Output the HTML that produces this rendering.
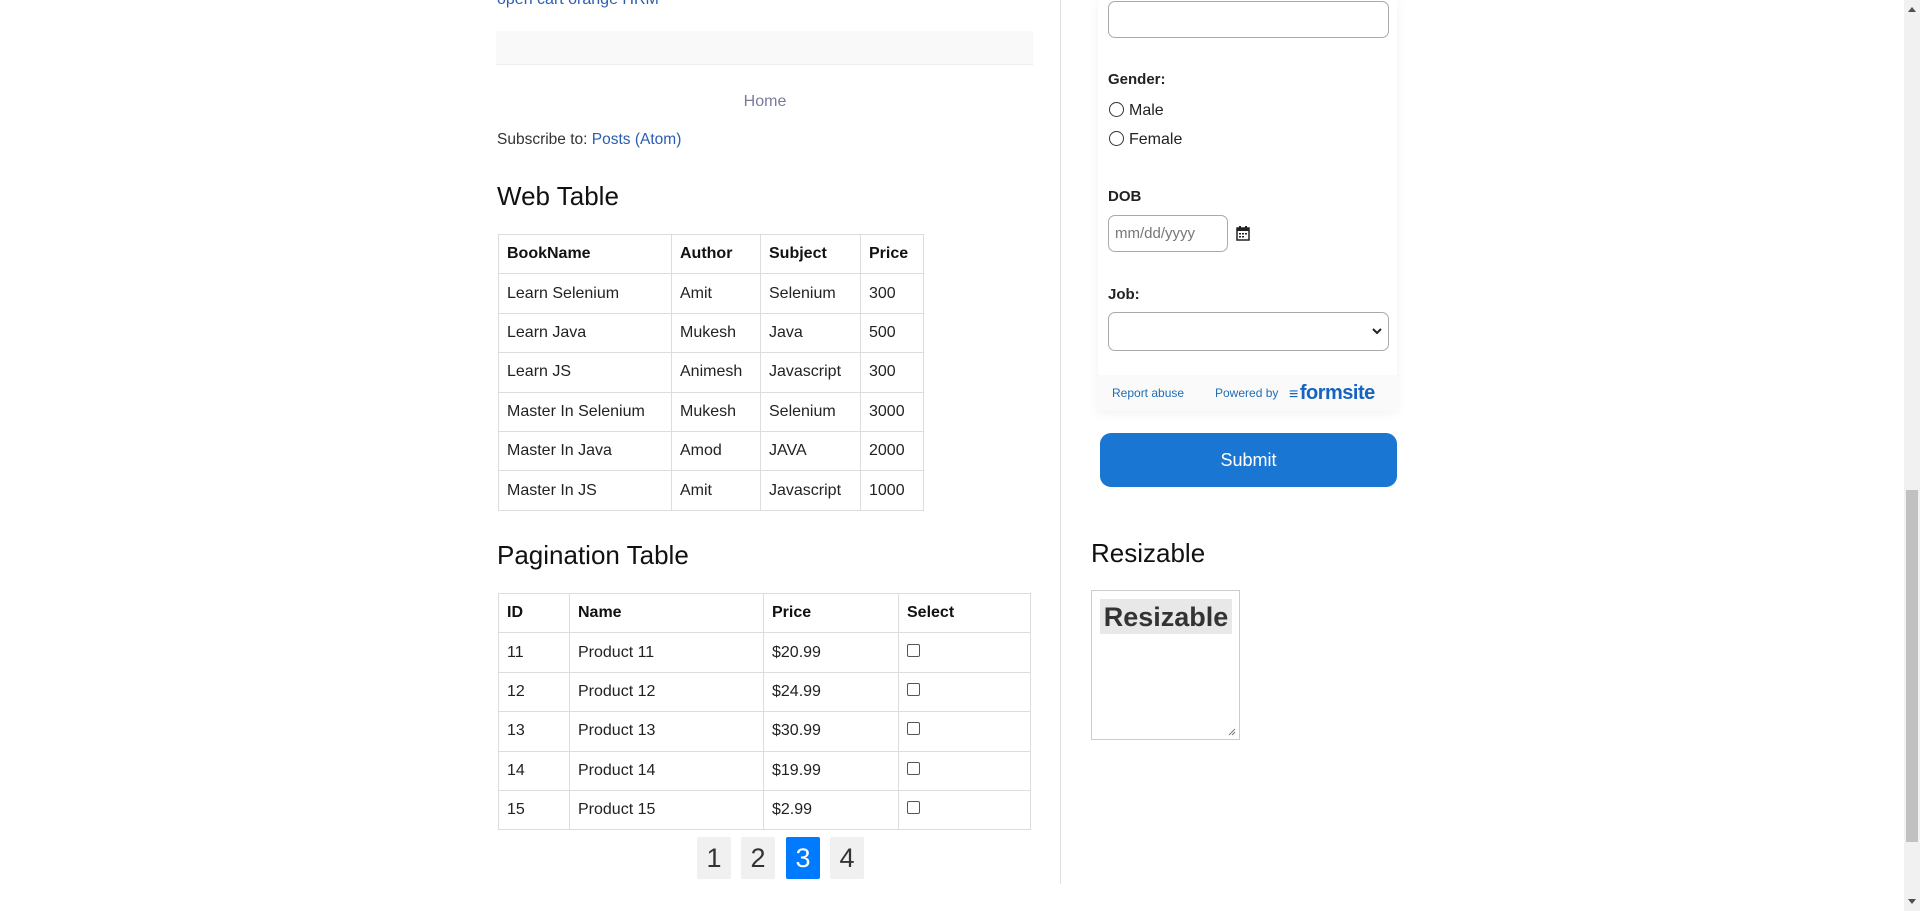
<!DOCTYPE html>
<html><head><meta charset="utf-8"><style>
*{box-sizing:border-box;margin:0;padding:0}
body{width:1920px;height:911px;overflow:hidden;background:#fff;font-family:"Liberation Sans",Arial,sans-serif;position:relative;color:#222}
.a{position:absolute}
a{color:#2a5db0;text-decoration:none}
table{border-collapse:collapse;position:absolute;font-size:16px}
td,th{border:1px solid #ddd;padding:0 8px;text-align:left;height:39.4px}
th{font-weight:bold;color:#111}
.lbl{font-weight:bold;font-size:15px;color:#222}
.pg{position:absolute;top:837px;width:34px;height:42px;background:#f0f0f0;font-size:27px;text-align:center;line-height:42px;color:#333;border-radius:2px}
.radio{display:inline-block;width:15px;height:15px;border:1.5px solid #333;border-radius:50%;vertical-align:-2px;margin-right:5px}
.cb{display:inline-block;width:13px;height:13px;border:1px solid #555;border-radius:2px}
</style></head><body>
<div class="a" style="left:497px;top:-9px;font-size:16px"><a>open cart orange HRM</a></div>
<div class="a" style="left:496px;top:31px;width:537px;height:34px;background:#f9f9f9;border-bottom:1px solid #eee"></div>
<div class="a" style="left:497px;top:93px;width:536px;text-align:center;font-size:16px;color:#7a7aa0">Home</div>
<div class="a" style="left:497px;top:131px;font-size:15.5px;color:#333">Subscribe to: <a>Posts (Atom)</a></div>
<div class="a" style="left:497px;top:181px;font-size:26px;color:#111">Web Table</div>
<table style="left:498px;top:234px;width:426px">
<tr><th style="width:173px">BookName</th><th style="width:89px">Author</th><th style="width:100px">Subject</th><th>Price</th></tr>
<tr><td>Learn Selenium</td><td>Amit</td><td>Selenium</td><td>300</td></tr>
<tr><td>Learn Java</td><td>Mukesh</td><td>Java</td><td>500</td></tr>
<tr><td>Learn JS</td><td>Animesh</td><td>Javascript</td><td>300</td></tr>
<tr><td>Master In Selenium</td><td>Mukesh</td><td>Selenium</td><td>3000</td></tr>
<tr><td>Master In Java</td><td>Amod</td><td>JAVA</td><td>2000</td></tr>
<tr><td>Master In JS</td><td>Amit</td><td>Javascript</td><td>1000</td></tr>
</table>
<div class="a" style="left:497px;top:540px;font-size:26px;color:#111">Pagination Table</div>
<table style="left:498px;top:593px;width:533px">
<tr><th style="width:71px">ID</th><th style="width:194px">Name</th><th style="width:135px">Price</th><th>Select</th></tr>
<tr><td>11</td><td>Product 11</td><td>$20.99</td><td><span class="cb"></span></td></tr>
<tr><td>12</td><td>Product 12</td><td>$24.99</td><td><span class="cb"></span></td></tr>
<tr><td>13</td><td>Product 13</td><td>$30.99</td><td><span class="cb"></span></td></tr>
<tr><td>14</td><td>Product 14</td><td>$19.99</td><td><span class="cb"></span></td></tr>
<tr><td>15</td><td>Product 15</td><td>$2.99</td><td><span class="cb"></span></td></tr>
</table>
<div class="pg" style="left:697px">1</div>
<div class="pg" style="left:741px">2</div>
<div class="pg" style="left:786px;background:#007bff;color:#fff">3</div>
<div class="pg" style="left:830px">4</div>
<div class="a" style="left:1060px;top:0;width:1px;height:884px;background:#e0e0e0"></div>

<div class="a" style="left:1098px;top:0;width:299px;height:411px;background:#fff;box-shadow:0 2px 10px rgba(0,0,0,.06)"></div>
<div class="a" style="left:1108px;top:1px;width:281px;height:37px;border:1px solid #aaa;border-radius:7px"></div>
<div class="a lbl" style="left:1108px;top:71px">Gender:</div>
<div class="a" style="left:1109px;top:102px;font-size:16px"><span class="radio"></span>Male</div>
<div class="a" style="left:1109px;top:131px;font-size:16px"><span class="radio"></span>Female</div>
<div class="a lbl" style="left:1108px;top:188px">DOB</div>
<div class="a" style="left:1108px;top:215px;width:120px;height:37px;border:1px solid #aaa;border-radius:7px;font-size:15px;color:#777;padding:9px 0 0 6px">mm/dd/yyyy</div>
<svg class="a" style="left:1236px;top:225px" width="14" height="16" viewBox="0 0 14 16"><rect x="1" y="3" width="12" height="12" fill="none" stroke="#222" stroke-width="1.5"/><rect x="1" y="3" width="12" height="3" fill="#222"/><rect x="3" y="1" width="2" height="3" fill="#222"/><rect x="9" y="1" width="2" height="3" fill="#222"/><g fill="#222"><rect x="3" y="8" width="2" height="1.5"/><rect x="6" y="8" width="2" height="1.5"/><rect x="9" y="8" width="2" height="1.5"/><rect x="3" y="11" width="2" height="1.5"/><rect x="6" y="11" width="2" height="1.5"/></g></svg>
<div class="a lbl" style="left:1108px;top:286px">Job:</div>
<div class="a" style="left:1108px;top:312px;width:281px;height:39px;border:1px solid #aaa;border-radius:7px"></div>
<svg class="a" style="left:1372px;top:327px" width="10" height="8" viewBox="0 0 10 8"><path d="M1 2l4 4 4-4" stroke="#222" stroke-width="2" fill="none"/></svg>
<div class="a" style="left:1098px;top:375px;width:299px;height:36px;background:#fafafa"></div>
<div class="a" style="left:1112px;top:386px;font-size:12px;color:#1f6db3">Report abuse</div>
<div class="a" style="left:1215px;top:386px;font-size:12px;color:#1f6db3">Powered by</div>
<div class="a" style="left:1289px;top:382px;font-size:20px;color:#1565c0;font-weight:bold;letter-spacing:-.5px"><span style="font-size:16px;vertical-align:0;margin-right:2px">&#8801;</span>formsite</div>
<div class="a" style="left:1100px;top:433px;width:297px;height:54px;background:#1976d2;border-radius:11px;color:#fff;font-size:18px;text-align:center;line-height:54px">Submit</div>

<div class="a" style="left:1091px;top:538px;font-size:26px;color:#111">Resizable</div>
<div class="a" style="left:1091px;top:590px;width:149px;height:150px;border:1px solid #ccc"></div>
<div class="a" style="left:1100px;top:599px;width:132px;height:35px;background:#e8e8e8;font-size:27px;font-weight:bold;color:#333;text-align:center;line-height:37px">Resizable</div>
<svg class="a" style="left:1228px;top:728px" width="8" height="8"><path d="M7 1L1 7M7 4L4 7" stroke="#777"/></svg>

<div class="a" style="left:1904px;top:0;width:16px;height:911px;background:#f1f1f1"></div>
<div class="a" style="left:1906px;top:490px;width:12px;height:352px;background:#c1c1c1"></div>
<svg class="a" style="left:1907px;top:5px" width="10" height="8"><path d="M1 7L5 2L9 7Z" fill="#505050"/></svg>
<svg class="a" style="left:1907px;top:898px" width="10" height="8"><path d="M1 1L5 6L9 1Z" fill="#505050"/></svg>
</body></html>
